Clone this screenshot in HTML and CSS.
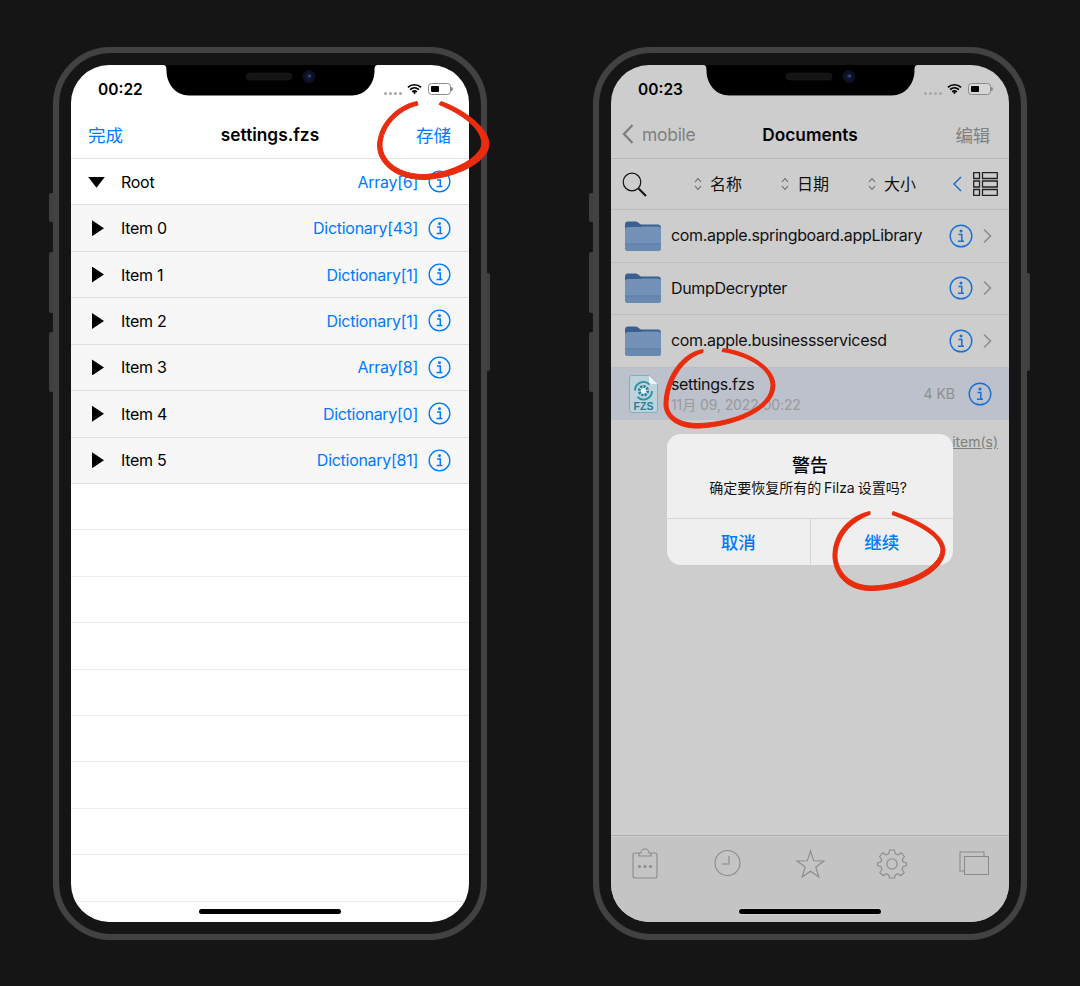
FILE: index.html
```html
<!DOCTYPE html>
<html lang="zh">
<head>
<meta charset="utf-8">
<title>Filza settings</title>
<link rel="stylesheet" href="styles.css">
</head>
<body>
<svg class="defs" width="0" height="0" aria-hidden="true">
  <symbol id="notch" viewBox="0 0 215 31">
    <path d="M0 0H215C212 0 211.500 2 211.500 6C211.500 19 202 30.500 189 30.500H26C13 30.500 3.500 19 3.500 6C3.500 2 3 0 0 0Z" fill="#000"/>
    <rect x="83" y="8" width="46" height="7" rx="3.500" fill="#141414" stroke="#1f1f1f" stroke-width=".5"/>
    <circle cx="146" cy="11.500" r="6.500" fill="#0c1020"/>
    <circle cx="146" cy="11.500" r="3" fill="#151c3c"/>
    <circle cx="146.500" cy="11" r="1" fill="#4a6ad8"/>
  </symbol>
  <symbol id="wifi" viewBox="0 0 16 12">
    <path d="M1 4.300C5 .500 11 .500 15 4.300M3.300 6.700C6 4.200 10 4.200 12.700 6.700M5.500 9C7 7.700 9 7.700 10.500 9" fill="none" stroke="currentColor" stroke-width="1.800"/>
    <path d="M6.500 10L8 8.700 9.500 10 8 11.600Z" fill="currentColor"/>
  </symbol>
  <symbol id="info" viewBox="0 0 24 24">
    <circle cx="12" cy="12" r="10.800" fill="none" stroke="currentColor" stroke-width="1.400"/>
    <circle cx="12" cy="7" r="1.500" fill="currentColor"/>
    <path d="M9.500 10.500H12.800V17.300H15M9 17.300H13" fill="none" stroke="currentColor" stroke-width="1.500"/>
  </symbol>
  <symbol id="folder" viewBox="0 0 36 30">
    <path d="M0 4C0 1.500 1 .500 3 .500H11C13 .500 14 3 16 3.500H33C35 3.500 36 5 36 7V12H0Z" fill="#3a5f92"/>
    <path d="M0 8.500C0 7 1 6 3 6H14C16 6 17 5.500 19 5.500H33C35 5.500 36 6.500 36 8V27C36 29 35 30 33 30H3C1 30 0 29 0 27Z" fill="#7491b8"/>
    <path d="M0 23H36V27C36 29 35 30 33 30H3C1 30 0 29 0 27Z" fill="#6a89b1"/>
    <path d="M0 23H36" stroke="#5a7ba6" stroke-width="1"/>
  </symbol>
  <symbol id="sort" viewBox="0 0 8 14">
    <path d="M1 5L4 1.500 7 5M1 9L4 12.500 7 9" fill="none" stroke="#666" stroke-width="1.100"/>
  </symbol>
  <symbol id="chev" viewBox="0 0 10 16">
    <path d="M2 1.500L8.500 8 2 14.500" fill="none" stroke="#8f8f8f" stroke-width="1.700"/>
  </symbol>
</svg>

<main class="stage">
  <section class="phone">
    <span class="btn btn-a"></span><span class="btn btn-b"></span><span class="btn btn-c"></span><span class="btn btn-r"></span>
    <div class="screen screen-light">
      <svg class="notch"><use href="#notch"/></svg>
      <div class="status">
        <span class="time">00:22</span>
        <div class="status-icons">
          <span class="dots"><i></i><i></i><i></i><i></i></span>
          <svg class="wifi"><use href="#wifi"/></svg>
          <span class="battery"><i></i></span>
        </div>
      </div>
      <header class="nav">
        <span class="nav-link">完成</span>
        <span class="nav-title">settings.fzs</span>
        <span class="nav-link">存储</span>
      </header>
      <div class="plist">
        <div class="prow prow-root"><span class="tri-down"></span><span class="pname">Root</span><span class="pval">Array[6]</span><svg class="pinfo"><use href="#info"/></svg></div>
        <div class="prow prow-item"><span class="tri-right"></span><span class="pname">Item 0</span><span class="pval">Dictionary[43]</span><svg class="pinfo"><use href="#info"/></svg></div>
        <div class="prow prow-item"><span class="tri-right"></span><span class="pname">Item 1</span><span class="pval">Dictionary[1]</span><svg class="pinfo"><use href="#info"/></svg></div>
        <div class="prow prow-item"><span class="tri-right"></span><span class="pname">Item 2</span><span class="pval">Dictionary[1]</span><svg class="pinfo"><use href="#info"/></svg></div>
        <div class="prow prow-item"><span class="tri-right"></span><span class="pname">Item 3</span><span class="pval">Array[8]</span><svg class="pinfo"><use href="#info"/></svg></div>
        <div class="prow prow-item"><span class="tri-right"></span><span class="pname">Item 4</span><span class="pval">Dictionary[0]</span><svg class="pinfo"><use href="#info"/></svg></div>
        <div class="prow prow-item"><span class="tri-right"></span><span class="pname">Item 5</span><span class="pval">Dictionary[81]</span><svg class="pinfo"><use href="#info"/></svg></div>
        <div class="prow"></div><div class="prow"></div><div class="prow"></div><div class="prow"></div>
        <div class="prow"></div><div class="prow"></div><div class="prow"></div><div class="prow"></div><div class="prow"></div>
      </div>
      <span class="home"></span>
    </div>
  </section>

  <section class="phone">
    <span class="btn btn-a"></span><span class="btn btn-b"></span><span class="btn btn-c"></span><span class="btn btn-r"></span>
    <div class="screen screen-dim">
      <svg class="notch"><use href="#notch"/></svg>
      <div class="status">
        <span class="time">00:23</span>
        <div class="status-icons">
          <span class="dots"><i></i><i></i><i></i><i></i></span>
          <svg class="wifi"><use href="#wifi"/></svg>
          <span class="battery"><i></i></span>
        </div>
      </div>
      <header class="nav nav-dim">
        <span class="back">
          <svg class="back-chev" viewBox="0 0 14 22"><path d="M11.500 2L3 11l8.500 9" fill="none" stroke="#808080" stroke-width="2.400"/></svg>
          <span class="nav-grey">mobile</span>
        </span>
        <span class="nav-title">Documents</span>
        <span class="nav-grey">编辑</span>
      </header>
      <div class="tools">
        <svg class="search" viewBox="0 0 25 25"><circle cx="10" cy="10" r="8.800" fill="none" stroke="#111" stroke-width="1.200"/><path d="M16.500 16.500L24 24" stroke="#111" stroke-width="2"/></svg>
        <div class="sorts">
          <span class="sort"><svg class="sort-ico"><use href="#sort"/></svg>名称</span>
          <span class="sort"><svg class="sort-ico"><use href="#sort"/></svg>日期</span>
          <span class="sort"><svg class="sort-ico"><use href="#sort"/></svg>大小</span>
        </div>
        <svg class="tool-chev" viewBox="0 0 9 16"><path d="M8 1L1 8l7 7" fill="none" stroke="#0f64c8" stroke-width="1.300"/></svg>
        <svg class="layout" viewBox="0 0 25 24"><path d="M.7.700H6.500V6.500H.7ZM.7 9H6.500V15H.7ZM.7 17.500H6.500V23.300H.7ZM9.500.700H24.300V6.500H9.500ZM9.500 9H24.300V15H9.500ZM9.500 17.500H24.300V23.300H9.500Z" fill="none" stroke="#222" stroke-width="1.300"/></svg>
      </div>
      <div class="files">
        <div class="frow"><svg class="folder"><use href="#folder"/></svg><span class="fname">com.apple.springboard.appLibrary</span><svg class="finfo"><use href="#info"/></svg><svg class="fchev"><use href="#chev"/></svg></div>
        <div class="frow"><svg class="folder"><use href="#folder"/></svg><span class="fname">DumpDecrypter</span><svg class="finfo"><use href="#info"/></svg><svg class="fchev"><use href="#chev"/></svg></div>
        <div class="frow"><svg class="folder"><use href="#folder"/></svg><span class="fname">com.apple.businessservicesd</span><svg class="finfo"><use href="#info"/></svg><svg class="fchev"><use href="#chev"/></svg></div>
        <div class="frow frow-sel">
          <svg class="fzs" viewBox="0 0 29 38">
            <path d="M3 .500H20L28.500 9V35C28.500 36.500 27.500 37.500 26 37.500H3C1.500 37.500.5 36.500.5 35V3C.5 1.500 1.500.5 3 .5Z" fill="#bcd3db" stroke="#7eb0bd" stroke-width="1"/>
            <path d="M20 .5V9H28.500Z" fill="#eef2f4"/>
            <path d="M6 15.500A8.500 8.500 0 0 1 20.500 9.500M23 16A8.500 8.500 0 0 1 8.500 22" fill="none" stroke="#2593aa" stroke-width="1.800"/>
            <circle cx="14.500" cy="15.700" r="4.200" fill="#f0f5f6" stroke="#1f7f9b" stroke-width="2.800" stroke-dasharray="2.200 1"/>
            <text class="fzs-label" x="14.500" y="34.500">FZS</text>
          </svg>
          <div class="fmeta"><span class="fname">settings.fzs</span><span class="fdate">11月 09, 2022 00:22</span></div>
          <span class="fsize">4 KB</span>
          <svg class="finfo"><use href="#info"/></svg>
        </div>
      </div>
      <div class="count"><span class="count-text">4 item(s)</span></div>
      <div class="spacer"></div>
      <footer class="bar">
        <svg class="bar-ico" viewBox="0 0 30 32"><path d="M5 5H11C11 3 12.500 1 15 1S19 3 19 5H25C26 5 27 6 27 7V28C27 29 26 30 25 30H5C4 30 3 29 3 28V7C3 6 4 5 5 5ZM9 5V8H21V5" fill="none" stroke="#8a8a8a" stroke-width="1.100"/><circle cx="9.500" cy="18.500" r="1.500" fill="#8a8a8a"/><circle cx="15" cy="18.500" r="1.500" fill="#8a8a8a"/><circle cx="20.500" cy="18.500" r="1.500" fill="#8a8a8a"/></svg>
        <svg class="bar-ico" viewBox="0 0 30 32"><circle cx="15.500" cy="15" r="12.500" fill="none" stroke="#8a8a8a" stroke-width="1.100"/><path d="M17 8V16H10" fill="none" stroke="#8a8a8a" stroke-width="1.100"/></svg>
        <svg class="bar-ico" viewBox="0 0 30 32"><path d="M15.500 3L18.700 12.800 29 13 20.800 19 23.800 29 15.500 23.200 7.200 29 10.200 19 2 13 12.300 12.800Z" fill="none" stroke="#8a8a8a" stroke-width="1.100"/></svg>
        <svg class="bar-ico" viewBox="0 0 30 32"><path d="M12.500 2H17.500L18.300 5.800 21 7 24.300 4.800 27.500 8.500 25.300 11.500 26.200 14 29.500 15 29.500 17.500 26 18.800 25 21.500 27.200 24.500 24 27.700 21 25.700 18.300 27 17.500 30H12.500L11.700 27 9 25.700 6 27.700 2.800 24.500 5 21.500 4 18.800.5 17.500.5 15 3.800 14 4.700 11.500 2.500 8.500 5.700 4.800 9 7 11.700 5.800Z" fill="none" stroke="#8a8a8a" stroke-width="1.100" stroke-linejoin="round"/><circle cx="15" cy="16" r="5.200" fill="none" stroke="#8a8a8a" stroke-width="1.100"/></svg>
        <svg class="bar-ico" viewBox="0 0 30 32"><path d="M5 23H1V4H25V8" fill="none" stroke="#8a8a8a" stroke-width="1.100"/><path d="M5.500 8.500H29.500V26.500H5.500Z" fill="none" stroke="#8a8a8a" stroke-width="1.100"/></svg>
      </footer>
      <span class="home"></span>
      <div class="alert">
        <div class="alert-body">
          <div class="alert-title">警告</div>
          <div class="alert-msg">确定要恢复所有的 Filza 设置吗?</div>
        </div>
        <div class="alert-btns"><span class="alert-btn">取消</span><span class="alert-btn">继续</span></div>
      </div>
    </div>
  </section>

  <svg class="marks" viewBox="0 0 1080 986" aria-hidden="true">
    <path class="mark" d="M417 101.500C395 106 378 125 377.500 146C378 165 398 180 425 179.500C455 178 490 162 489 143C488 128 465 110 441 101.500L439 104.500C462 114 481 128 482 143C482 157 452 173 425 174.500C400 175 383 162 382 146C382 127 398 110 418 105Z"/>
    <path class="mark" d="M703 349.500C680 353 664 380 664 405C665 420 680 429 700 428C735 426 775 410 775 385C774 365 745 351 723 348.500L722 351.500C745 355 770 367 771 385C771 407 735 422 700 423.500C683 424 669 418 668 405C668 382 683 358 703 352.500Z"/>
    <path class="mark" d="M870 511.500C848 516 832 535 833 558C835 578 850 591 872 590.500C905 590 945 573 945 550C944 532 915 519 893 511.500L892 514.500C915 523 940 535 941 550C940 568 905 585 872 586C853 586 839 575 837 558C836 537 852 521 870 514.500Z"/>
  </svg>
</main>
</body>
</html>
```

FILE: styles.css
```css
* { box-sizing: border-box; }
html, body { margin: 0; padding: 0; background: #151515; }
body { font-family: Inter, "Noto Sans CJK SC", sans-serif; overflow: hidden; }
.defs { position: absolute; }

.stage { position: relative; width: 1080px; height: 986px; display: flex; gap: 106px; padding: 47px 53px; }
.phone { position: relative; width: 434px; height: 893px; padding: 12px; border: 6px solid #424242; border-radius: 58px; background: #151515; box-shadow: 0 0 1px #333, inset 0 0 1px #333; }
.btn { position: absolute; background: #3f3f3f; }
.btn-a { left: -10px; top: 140px; width: 4px; height: 29px; border-radius: 2px 0 0 2px; }
.btn-b { left: -10px; top: 199px; width: 4px; height: 61px; border-radius: 2px 0 0 2px; }
.btn-c { left: -10px; top: 279px; width: 4px; height: 60px; border-radius: 2px 0 0 2px; }
.btn-r { right: -9px; top: 220px; width: 3px; height: 98px; border-radius: 0 2px 2px 0; }

.screen { position: relative; height: 857px; border-radius: 38px; overflow: hidden; display: flex; flex-direction: column; }
.screen-light { background: #fff; }
.screen-dim { background: #cdcdcd; }
.notch { position: absolute; left: 92px; top: 0; width: 215px; height: 31px; }
.screen-dim .notch { filter: drop-shadow(0 .6px 0 rgba(255, 255, 255, .7)); }

.status { height: 45px; flex: none; display: flex; justify-content: space-between; padding: 15px 18px 0 27px; }
.time { font-size: 15.500px; line-height: 20px; font-weight: 600; color: #000; }
.status-icons { display: flex; align-items: flex-start; padding-top: 3px; }
.dots { display: flex; gap: 2px; margin-top: 9px; }
.dots i { width: 3px; height: 3px; border-radius: 50%; background: #a8a8a8; }
.wifi { width: 15px; height: 12px; margin-left: 5px; color: #000; }
.battery { position: relative; width: 23px; height: 12px; margin-left: 6px; padding: 2px; border: 1px solid #8a8a8a; border-radius: 3.500px; background: #fff; }
.battery::after { content: ""; position: absolute; right: -3px; top: 3px; width: 2px; height: 4px; border-radius: 0 2px 2px 0; background: #8a8a8a; }
.battery i { display: block; width: 8px; height: 6px; border-radius: 1px; background: #000; }
.screen-dim .battery { background: #d6d6d6; }

.nav { height: 49px; flex: none; display: flex; align-items: center; justify-content: space-between; padding: 2px 18px 2px 17px; border-bottom: 1px solid #e2e2e2; }
.nav-link { font-size: 17.500px; color: #007aff; }
.nav-title { position: absolute; left: 0; right: 0; text-align: center; font-size: 17.300px; line-height: 22px; margin-top: 1px; font-weight: 600; color: #000; pointer-events: none; }
.nav-dim { border-bottom-color: #b8b8b8; padding-left: 10px; padding-right: 19px; }
.nav-grey { font-size: 17.500px; color: #808080; letter-spacing: -.3px; }
.back { display: flex; align-items: center; gap: 7px; }
.back-chev { width: 14px; height: 22px; }

.plist { flex: none; }
.prow { height: 46.430px; display: flex; align-items: center; padding: 0 18px 0 17px; border-bottom: 1px solid #ececec; font-size: 16px; letter-spacing: -.28px; }
.prow-item { background: #f7f7f7; border-bottom-color: #dedede; }
.prow-root { border-bottom-color: #dedede; }
.tri-down { width: 17px; height: 11px; margin-top: 1px; margin-right: 16px; background: #000; clip-path: polygon(0 0, 100% 0, 50% 100%); }
.tri-right { width: 12px; height: 16px; margin-left: 4px; margin-right: 17px; background: #000; clip-path: polygon(0 0, 100% 50%, 0 100%); }
.pname { flex: 1; color: #000; }
.pval { color: #007aff; margin-right: 10px; }
.pinfo { width: 23px; height: 23px; color: #007aff; }

.home { position: absolute; left: 128px; bottom: 8px; width: 142px; height: 5px; border-radius: 3px; background: #000; }
.screen-dim .home { box-shadow: 0 0 0 .5px rgba(255, 255, 255, .4); }

.tools { height: 51px; flex: none; display: flex; align-items: center; padding: 0 11px 0 11px; border-bottom: 1px solid #bcbcbc; }
.search { width: 25px; height: 25px; flex: none; }
.sorts { display: flex; width: 259px; flex: none; margin-left: 47px; }
.sort { display: flex; align-items: center; flex: none; width: 87px; gap: 8px; font-size: 16px; line-height: 20px; color: #111; padding-bottom: 1px; }
.sort-ico { width: 8px; height: 14px; flex: none; }
.tool-chev { width: 9px; height: 16px; flex: none; }
.layout { width: 25px; height: 24px; margin-left: 11px; flex: none; }

.files { flex: none; }
.frow { height: 52.500px; display: flex; align-items: center; padding: 0 17px 0 14px; border-bottom: 1px solid #bdbdbd; font-size: 16px; letter-spacing: -.33px; }
.frow-sel { background: #bcc1cb; border-bottom: 0; padding-left: 18px; padding-right: 17px; }
.folder { width: 36px; height: 30px; margin-right: 10px; flex: none; }
.fzs { width: 29px; height: 38px; margin-right: 13px; flex: none; }
.fzs-label { font-family: "Liberation Sans", sans-serif; font-size: 10.500px; font-weight: 700; fill: #2a7f99; text-anchor: middle; letter-spacing: 0; }
.fname { color: #111; flex: 1; padding-bottom: 1px; }
.finfo { width: 24px; height: 24px; flex: none; color: #1670d8; }
.fchev { width: 10px; height: 16px; margin-left: 9px; flex: none; }
.fmeta { flex: 1; display: flex; flex-direction: column; gap: 2px; padding-top: 1px; }
.fdate { font-size: 14px; color: #9a9a9a; line-height: 18px; letter-spacing: -.1px; }
.fmeta .fname { flex: none; line-height: 20px; padding-bottom: 0; }
.fsize { font-size: 14px; color: #8f8f8f; margin-right: 13px; letter-spacing: 0; }

.count { height: 44px; flex: none; display: flex; justify-content: flex-end; align-items: center; padding: 0 11px 2px 0; }
.count-text { font-size: 14px; color: #808080; text-decoration: underline; }
.spacer { flex: 1; }

.bar { height: 87px; flex: none; display: flex; justify-content: space-between; align-items: flex-start; padding: 12px 20px 0 19px; background: #c4c4c4; border-top: 1px solid #aeaeae; box-shadow: inset 0 1px 0 #cfcfcf; }
.bar-ico { width: 30px; height: 32px; }

.alert { position: absolute; left: 56px; top: 369px; width: 286px; height: 131px; border-radius: 14px; background: #efefef; display: flex; flex-direction: column; }
.alert-body { height: 85px; display: flex; flex-direction: column; align-items: center; padding-top: 20px; border-bottom: 1px solid #d4d4d4; }
.alert-title { font-size: 18px; line-height: 24px; font-weight: 500; color: #000; }
.alert-msg { font-size: 14px; line-height: 20px; color: #111; word-spacing: -1px; margin-right: 4px; }
.alert-btns { flex: 1; display: flex; }
.alert-btn { flex: 1; display: flex; align-items: center; justify-content: center; padding-bottom: 2px; font-size: 17.500px; font-weight: 500; color: #007aff; }
.alert-btn + .alert-btn { border-left: 1px solid #d4d4d4; }

.marks { position: absolute; left: 0; top: 0; width: 1080px; height: 986px; pointer-events: none; }
.mark { fill: #e92c0e; stroke: #e92c0e; stroke-width: 1; stroke-linejoin: round; }
```
